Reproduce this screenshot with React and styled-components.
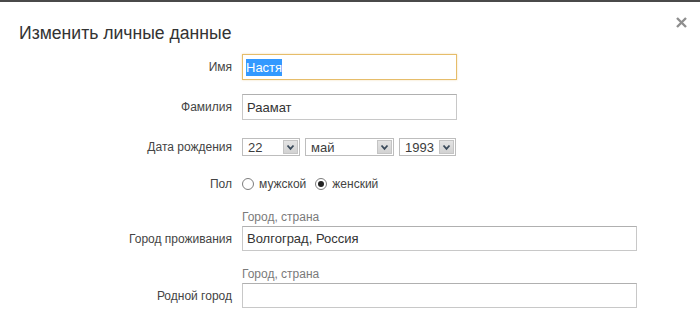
import React from 'react';
import styled, { createGlobalStyle } from 'styled-components';

const Global = createGlobalStyle`
  html, body {
    margin: 0;
    padding: 0;
    background: #fff;
  }
  * {
    box-sizing: border-box;
    font-family: "Liberation Sans", Arial, sans-serif;
  }
`;

const Modal = styled.div`
  position: relative;
  width: 700px;
  height: 324px;
  border-top: 2px solid #4a4a4a;
  padding-top: 21px;
  overflow: hidden;
`;

const Title = styled.h1`
  margin: 0 0 0 19px;
  font-size: 17.6px;
  line-height: 20px;
  font-weight: normal;
  color: #333;
`;

const Close = styled.button`
  position: absolute;
  top: 13px;
  right: 12px;
  width: 14px;
  height: 14px;
  padding: 0;
  border: 0;
  background: none;
  display: flex;
  align-items: center;
  justify-content: center;
`;

const Form = styled.div`
  display: flex;
  flex-direction: column;
`;

const Row = styled.div`
  display: grid;
  grid-template-columns: 232px 1fr;
  column-gap: 10px;
  align-items: center;
  margin-top: ${p => p.$top}px;
  height: ${p => p.$h}px;
`;

const Label = styled.div`
  text-align: right;
  font-size: 12px;
  color: #444;
  grid-column: 1;
  align-self: ${p => (p.$end ? 'end' : 'center')};
  line-height: ${p => (p.$end ? '24px' : 'normal')};
`;

const Hint = styled.div`
  grid-column: 2;
  font-size: 12px;
  line-height: 14px;
  color: #7a7a7a;
  margin-bottom: 2px;
`;

const Stack = styled.div`
  display: grid;
  grid-template-columns: 232px 1fr;
  column-gap: 10px;
  margin-top: ${p => p.$top}px;
`;

const TextBox = styled.input`
  width: ${p => p.$w}px;
  height: ${p => p.$h || 26}px;
  border: 1px solid #c8c8c8;
  border-top-color: #b0b0b0;
  padding: 0 4px;
  font-size: 13px;
  color: #333;
  background: #fff;
  outline: none;
`;

const FocusBox = styled.div`
  width: 215px;
  height: 26px;
  border: 1px solid #e6bd6a;
  box-shadow: 0 0 2px rgba(230, 180, 90, 0.45);
  padding: 0 3px;
  display: flex;
  align-items: center;
  font-size: 13px;
`;

const Selected = styled.span`
  background: #3399ff;
  color: #fff;
  padding: 1px 0;
`;

const Selects = styled.div`
  display: flex;
  gap: 5px;
`;

const SelectBox = styled.div`
  width: ${p => p.$w}px;
  height: 18px;
  border: 1px solid #bdbdbd;
  display: flex;
  align-items: center;
  font-size: 13px;
  color: #3c3c3c;
  background: #fff;
  padding-left: 5px;
`;

const SelectText = styled.span`
  flex: 1;
`;

const Arrow = styled.span`
  width: 15px;
  height: 14px;
  margin-right: 1px;
  background: linear-gradient(#e4e4e4, #d2d2d2);
  border: 1px solid #c4c4c4;
  display: flex;
  align-items: center;
  justify-content: center;
`;

const Radios = styled.div`
  display: flex;
  align-items: center;
  gap: 9px;
  font-size: 12px;
  color: #444;
`;

const RadioOption = styled.label`
  display: flex;
  align-items: center;
  gap: 5px;
`;

const Circle = styled.span`
  width: 12px;
  height: 12px;
  border-radius: 50%;
  border: 1px solid #7d7d7d;
  background: #fff;
  display: flex;
  align-items: center;
  justify-content: center;
  &::after {
    content: '';
    width: 6px;
    height: 6px;
    border-radius: 50%;
    background: ${p => (p.$on ? '#222' : 'transparent')};
  }
`;

const Chevron = () => (
  <svg width="9" height="7" viewBox="0 0 9 7">
    <path d="M1.5 1.5 L4.5 4.8 L7.5 1.5" fill="none" stroke="#3a4a5a" strokeWidth="1.8" />
  </svg>
);

const Select = ({ w, value }) => (
  <SelectBox $w={w}>
    <SelectText>{value}</SelectText>
    <Arrow>
      <Chevron />
    </Arrow>
  </SelectBox>
);

export default function App() {
  return (
    <>
      <Global />
      <Modal>
        <Title>Изменить личные данные</Title>
        <Close aria-label="Закрыть">
          <svg width="11" height="11" viewBox="0 0 11 11">
            <path d="M1 1 L10 10 M10 1 L1 10" stroke="#8f8f8f" strokeWidth="2.4" />
          </svg>
        </Close>
        <Form>
          <Row $top={11} $h={26}>
            <Label>Имя</Label>
            <FocusBox>
              <Selected>Настя</Selected>
            </FocusBox>
          </Row>
          <Row $top={14} $h={26}>
            <Label>Фамилия</Label>
            <TextBox $w={215} defaultValue="Раамат" readOnly />
          </Row>
          <Row $top={18} $h={18}>
            <Label>Дата рождения</Label>
            <Selects>
              <Select w={58} value="22" />
              <Select w={89} value="май" />
              <Select w={57} value="1993" />
            </Selects>
          </Row>
          <Row $top={20} $h={16}>
            <Label>Пол</Label>
            <Radios>
              <RadioOption>
                <Circle />
                мужской
              </RadioOption>
              <RadioOption>
                <Circle $on />
                женский
              </RadioOption>
            </Radios>
          </Row>
          <Stack $top={18}>
            <Hint>Город, страна</Hint>
            <Label $end>Город проживания</Label>
            <TextBox $w={395} $h={25} defaultValue="Волгоград, Россия" readOnly />
          </Stack>
          <Stack $top={16}>
            <Hint>Город, страна</Hint>
            <Label $end>Родной город</Label>
            <TextBox $w={395} $h={25} defaultValue="" readOnly />
          </Stack>
        </Form>
      </Modal>
    </>
  );
}
